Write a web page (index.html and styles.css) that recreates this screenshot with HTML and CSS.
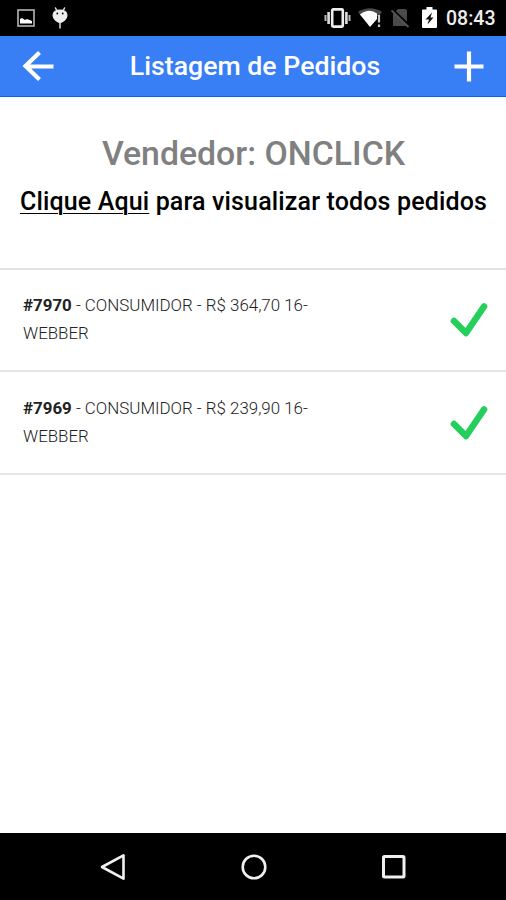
FILE: index.html
```html
<!DOCTYPE html>
<html lang="pt-BR">
<head>
    <meta charset="UTF-8">
    <meta name="viewport" content="width=device-width, initial-scale=1.0">
    <title>Listagem de Pedidos</title>
    <link rel="stylesheet" href="styles.css">
</head>
<body>
    <div class="status-bar">
        <div class="status-left">
            <svg width="18" height="18" viewBox="0 0 18 18">
                <rect x="1" y="1" width="16" height="16" fill="none" stroke="#aaa" stroke-width="1.7"/>
                <path d="M3 14.5V10l2-1 3 2 2-1 5 2v2.500z" fill="#fff"/>
            </svg>
            <svg width="16" height="22" viewBox="0 0 16 22">
                <path d="M3.500 1l1.500 3M12.500 1L11 4M8 14v7" stroke="#ddd" stroke-width="1.500" stroke-linecap="round"/>
                <path d="M.5 8Q1 2.500 8 2.500T15.500 8Q15.500 12 11 15 8 17 5 15 .5 12 .5 8z" fill="#eee"/>
                <circle cx="5.300" cy="6.500" r=".9"/>
                <circle cx="10.700" cy="6.500" r=".9"/>
            </svg>
        </div>
        <div class="status-right">
            <svg width="27" height="20" viewBox="0 0 27 20">
                <rect x="8.200" y="1.400" width="10.600" height="17.200" rx="1" fill="none" stroke="#eee" stroke-width="2.600"/>
                <path d="M4.600 4v12M22.400 4v12" stroke="#ddd" stroke-width="2.600"/>
                <path d="M1.500 7v6M25.500 7v6" stroke="#bbb" stroke-width="2"/>
            </svg>
            <svg class="wifi" width="24" height="20" viewBox="0 0 24 20">
                <path d="M0 4Q12-3.500 24 4l-3 4H3z" fill="#4a4a4a"/>
                <path d="M2 6.500Q11-.5 19 5.500V11L12 19z" fill="#fff"/>
                <path d="M21 7v7.500M21 16.500v2.500" stroke="#ccc" stroke-width="2.200"/>
            </svg>
            <svg class="sim" width="19" height="20" viewBox="0 0 19 20">
                <path d="M2 6l5-5h7q2 0 2 2v15H2z" fill="#4a4a4a"/>
                <path d="M1 1.500L18.500 18" stroke="#000" stroke-width="3"/>
                <path d="M.5 2.500L17.500 19" stroke="#555" stroke-width="1.800"/>
            </svg>
            <svg class="battery" width="15" height="22" viewBox="0 0 15 22">
                <path d="M1 2.500h3.500V0h6v2.500H14q1 0 1 1V20q0 1-1 1H1q-1 0-1-1V3.500q0-1 1-1z" fill="#fff"/>
                <path d="M10 5.500l-6.500 7h3.500l-1.500 5 6-7H8.500z" fill="#111"/>
            </svg>
            <span class="clock">08:43</span>
        </div>
    </div>

    <div class="header">
        <svg width="32" height="32" viewBox="0 0 32 32">
            <path d="M17.500 2.500L3.500 16l14 13.500M3.500 16.500H31.500" fill="none" stroke="#fff" stroke-width="4.200"/>
        </svg>
        <h1 class="title">Listagem de Pedidos</h1>
        <svg width="30" height="32" viewBox="0 0 30 32">
            <path d="M15 1.500v30M.5 16.500h29" stroke="#fff" stroke-width="4.200"/>
        </svg>
    </div>

    <div class="content">
        <div class="intro">
            <h2 class="vendor">Vendedor: ONCLICK</h2>
            <p class="all-orders"><a href="#">Clique Aqui</a> para visualizar todos pedidos</p>
        </div>

        <ul class="orders">
            <li class="order">
                <p><b>#7970</b> - CONSUMIDOR - R$ 364,70 16-<br>WEBBER</p>
                <svg width="38" height="36" viewBox="0 0 38 36">
                    <path d="M4 19l12 12L34 4.500" fill="none" stroke="#25cf5c" stroke-width="6.600" stroke-linecap="round" stroke-linejoin="round"/>
                </svg>
            </li>
            <li class="order">
                <p><b>#7969</b> - CONSUMIDOR - R$ 239,90 16-<br>WEBBER</p>
                <svg width="38" height="36" viewBox="0 0 38 36">
                    <path d="M4 19l12 12L34 4.500" fill="none" stroke="#25cf5c" stroke-width="6.600" stroke-linecap="round" stroke-linejoin="round"/>
                </svg>
            </li>
        </ul>
    </div>

    <div class="nav-bar">
        <svg width="28" height="28" viewBox="0 0 28 28">
            <path d="M3 14L24.500 2.300v23.400z" fill="none" stroke="#f0f0f0" stroke-width="2.600" stroke-linejoin="round"/>
        </svg>
        <svg width="28" height="28" viewBox="0 0 28 28">
            <circle cx="14" cy="14" r="11.300" fill="none" stroke="#f0f0f0" stroke-width="2.600"/>
        </svg>
        <svg width="28" height="28" viewBox="0 0 28 28">
            <rect x="3.500" y="3.500" width="20.500" height="20.500" rx="1" fill="none" stroke="#f0f0f0" stroke-width="3"/>
        </svg>
    </div>
</body>
</html>
```
FILE: styles.css
```css
* {
    box-sizing: border-box;
}

body {
    margin: 0;
    height: 900px;
    display: flex;
    flex-direction: column;
    overflow: hidden;
    background: #fff;
    color: #000;
    font-family: Roboto, "Liberation Sans", sans-serif;
}

h1, h2, p, ul {
    margin: 0;
    padding: 0;
}

svg {
    display: block;
    flex: none;
}

.status-bar {
    height: 36px;
    padding: 0 11px 0 17px;
    display: flex;
    align-items: center;
    justify-content: space-between;
    background: #000;
}

.status-left, .status-right {
    display: flex;
    align-items: center;
}

.status-left {
    gap: 17px;
}

.wifi {
    margin-left: 7px;
}

.sim {
    margin-left: 9px;
}

.battery {
    margin-left: 12px;
}

.clock {
    width: 49px;
    margin-left: 9px;
    padding-top: 2px;
    color: #eee;
    font-size: 19.5px;
    font-weight: 500;
    line-height: 34px;
    white-space: nowrap;
}

.header {
    height: 61px;
    padding: 0 22px;
    display: flex;
    align-items: center;
    justify-content: space-between;
    background: #387ef5;
    border-bottom: 1px solid #0c60ee;
}

.title {
    padding-left: 2px;
    color: #fff;
    font-size: 26.7px;
    font-weight: 500;
    line-height: 60px;
}

.content {
    flex: 1;
}

.intro {
    height: 171px;
    padding-top: 37px;
    text-align: center;
    white-space: nowrap;
}

.vendor {
    padding-left: 1px;
    color: #808080;
    font-size: 33.8px;
    font-weight: 500;
    line-height: 40px;
}

.all-orders {
    margin-top: 12px;
    padding-left: 1px;
    font-size: 25px;
    font-weight: 500;
    line-height: 32px;
    letter-spacing: 0.15px;
}

.all-orders a {
    color: inherit;
    text-decoration-thickness: 1px;
    text-underline-offset: 3px;
}

.orders {
    list-style: none;
    border-top: 2px solid #e2e2e2;
}

.order {
    height: 103px;
    padding: 0 18px 0 23px;
    display: flex;
    align-items: center;
    justify-content: space-between;
    border-bottom: 2px solid #e6e6e6;
}

.order:first-child {
    height: 102px;
}

.order p {
    width: 300px;
    padding-bottom: 2px;
    color: #222;
    font-size: 16.9px;
    font-weight: 300;
    line-height: 28px;
}

.order b {
    color: #222;
    font-weight: 700;
}

.nav-bar {
    height: 67px;
    padding: 0 98px 0 99px;
    display: flex;
    align-items: center;
    justify-content: space-between;
    background: #000;
}
```
